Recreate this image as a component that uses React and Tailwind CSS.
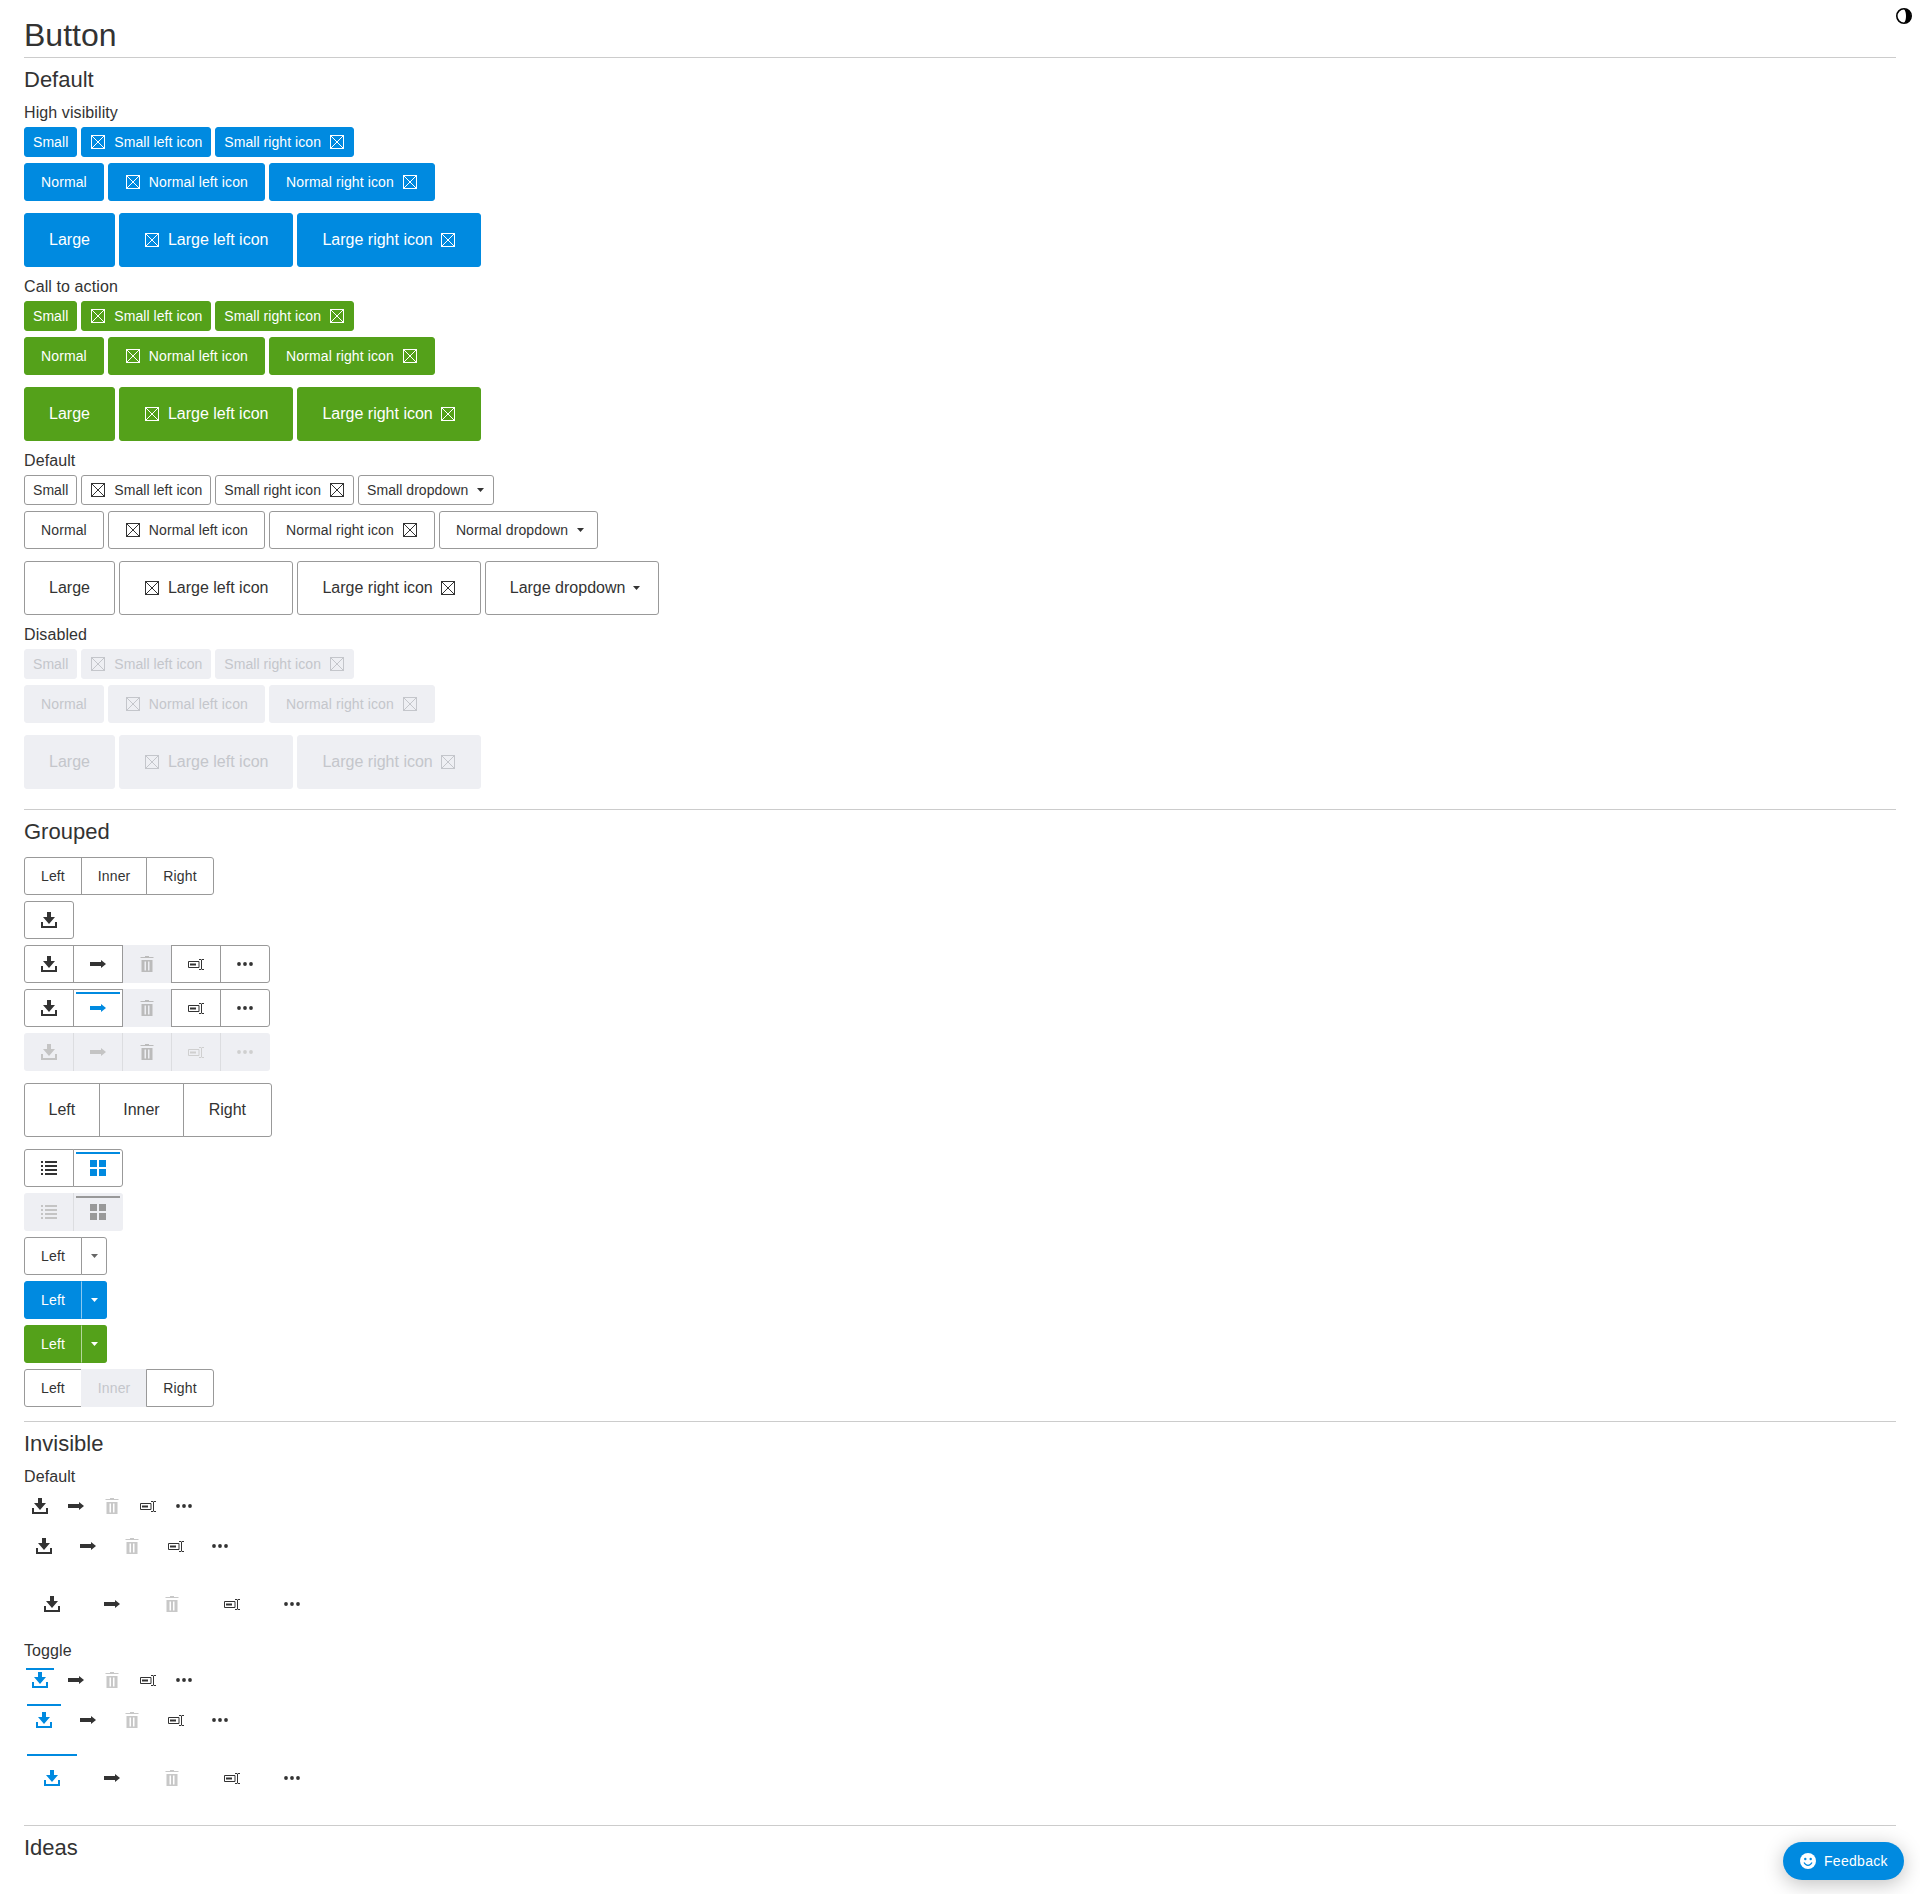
import { Fragment } from 'react';

const BLUE = 'bg-[#008ae0] border-[#008ae0] text-white';
const GREEN = 'bg-[#54a11a] border-[#54a11a] text-white';
const PLAIN = 'bg-white border-[#999999] text-[#333333]';
const OFF = 'bg-[#eeeff3] border-[#eeeff3] text-[#c4c6cb]';

const sizes = {
  small: {
    height: 'h-[30px]',
    text: 'text-[14px] tracking-[0.06px]',
    plain: 'px-[8px]',
    left: 'pl-[9px] pr-[8px] gap-[9px]',
    right: 'pl-[8px] pr-[9px] gap-[9px]',
    drop: 'pl-[8px] pr-[9px] gap-[9px]',
  },
  normal: {
    height: 'h-[38px]',
    text: 'text-[14px] tracking-[0.12px]',
    plain: 'px-[16px]',
    left: 'pl-[17px] pr-[16px] gap-[9px]',
    right: 'pl-[16px] pr-[17px] gap-[9px]',
    drop: 'pl-[16px] pr-[13px] gap-[9px]',
  },
  large: {
    height: 'h-[54px]',
    text: 'text-[16px]',
    plain: 'px-[24px]',
    left: 'pl-[25px] pr-[24px] gap-[9px]',
    right: 'pl-[24px] pr-[25px] gap-[8px]',
    drop: 'pl-[24px] pr-[18px] gap-[8px]',
  },
};

function BoxIcon({ className }) {
  return (
    <svg viewBox="0 0 14 14" className={`w-[14px] h-[14px] shrink-0 ${className}`} fill="none" stroke="currentColor" strokeWidth="1">
      <rect x="0.5" y="0.5" width="13" height="13" />
      <path d="M1 1l12 12M13 1L1 13" />
    </svg>
  );
}

function Caret({ className = '' }) {
  return (
    <svg viewBox="0 0 7 4" className={`w-[7px] h-[4px] shrink-0 ${className}`} fill="currentColor">
      <path d="M0 0h7L3.5 4z" />
    </svg>
  );
}

function DownloadIcon({ className = '' }) {
  return (
    <svg viewBox="0 0 16 16" className={`w-4 h-4 shrink-0 ${className}`} fill="currentColor">
      <path d="M6 0h4v5h4l-6 7-6-7h4z" />
      <path d="M0 10h2v4h12v-4h2v6H0z" />
    </svg>
  );
}

function ArrowIcon({ className = '' }) {
  return (
    <svg viewBox="0 0 16 16" className={`w-4 h-4 shrink-0 ${className}`} fill="currentColor">
      <path d="M0 6h11V4l5 4-5 4v-2H0z" />
    </svg>
  );
}

function TrashIcon({ className = '' }) {
  return (
    <svg viewBox="0 0 16 16" className={`w-4 h-4 shrink-0 ${className}`} fill="currentColor">
      <path d="M6 0h4v1h4.500v1h-13V1H6z" />
      <path fillRule="evenodd" d="M2.500 4h11v12h-11zM5.500 5.500v9h1.500v-9zM9 5.500v9h1.500v-9z" />
    </svg>
  );
}

function RenameIcon({ className = '' }) {
  return (
    <svg viewBox="0 0 16 16" className={`w-4 h-4 shrink-0 ${className}`} fill="none" stroke="currentColor" strokeWidth="1">
      <path d="M11 5.500H0.500v6H11z" />
      <rect x="2" y="7.500" width="6" height="2" fill="currentColor" stroke="none" />
      <path d="M11 3.500h2l.5.5.5-.5h2M13.500 4v9M11 13.500h2l.5-.5.5.5h2" />
    </svg>
  );
}

function DotsIcon({ className = '' }) {
  return (
    <svg viewBox="0 0 16 16" className={`w-4 h-4 shrink-0 ${className}`} fill="currentColor">
      <circle cx="2" cy="8" r="1.900" />
      <circle cx="8" cy="8" r="1.900" />
      <circle cx="14" cy="8" r="1.900" />
    </svg>
  );
}

function ListIcon({ className = '' }) {
  return (
    <svg viewBox="0 0 16 16" className={`w-4 h-4 shrink-0 ${className}`} fill="currentColor">
      <path d="M0 1h2v2H0zM4 1h12v2H4zM0 5h2v2H0zM4 5h12v2H4zM0 9h2v2H0zM4 9h12v2H4zM0 13h2v2H0zM4 13h12v2H4z" />
    </svg>
  );
}

function GridIcon({ className = '' }) {
  return (
    <svg viewBox="0 0 16 16" className={`w-4 h-4 shrink-0 ${className}`} fill="currentColor">
      <path d="M0 0h7v7H0zM9 0h7v7H9zM0 9h7v7H0zM9 9h7v7H9z" />
    </svg>
  );
}

function ContrastIcon() {
  return (
    <svg viewBox="0 0 16 16" className="w-4 h-4">
      <circle cx="8" cy="8" r="7.200" fill="#ffffff" stroke="#000000" strokeWidth="1.600" />
      <path d="M8 1a7 7 0 0 1 0 14c1.500-2 2-4 2-7s-.5-5-2-7z" fill="#000000" />
    </svg>
  );
}

function SmileIcon() {
  return (
    <svg viewBox="0 0 16 16" className="w-4 h-4 shrink-0">
      <circle cx="8" cy="8" r="8" fill="#ffffff" />
      <circle cx="5.300" cy="6" r="1.200" fill="#008ae0" />
      <circle cx="10.700" cy="6" r="1.200" fill="#008ae0" />
      <path d="M4 9.500c1 2 2.500 2.800 4 2.800s3-.8 4-2.800" fill="none" stroke="#008ae0" strokeWidth="1.200" />
    </svg>
  );
}

function Btn({ size, tone, label, kind }) {
  const s = sizes[size];
  const pad = kind ? s[kind] : s.plain;
  return (
    <button className={`${s.height} ${s.text} ${pad} ${tone} flex items-center border rounded-[3px] whitespace-nowrap`}>
      {kind === 'left' && <BoxIcon />}
      <span>{label}</span>
      {kind === 'right' && <BoxIcon />}
      {kind === 'drop' && <Caret />}
    </button>
  );
}

function ButtonSet({ title, tone, dropdown }) {
  const names = [
    ['small', 'Small'],
    ['normal', 'Normal'],
    ['large', 'Large'],
  ];
  return (
    <>
      <div className="mt-[9px] mb-[5px] h-[20px] pt-px text-[16px] leading-[20px] tracking-[0.1px]">{title}</div>
      {names.map(([size, name], i) => (
        <div key={size} className={`flex gap-[4px] ${i === 1 ? 'mt-[6px]' : ''} ${i === 2 ? 'mt-[12px]' : ''}`}>
          <Btn size={size} tone={tone} label={name} />
          <Btn size={size} tone={tone} label={`${name} left icon`} kind="left" />
          <Btn size={size} tone={tone} label={`${name} right icon`} kind="right" />
          {dropdown && <Btn size={size} tone={tone} label={`${name} dropdown`} kind="drop" />}
        </div>
      ))}
    </>
  );
}

function Heading({ children, rule = true }) {
  return (
    <>
      {rule && <div className="h-px bg-[#cccccc]" />}
      <h2 className="mt-[7px] h-[28px] pt-px text-[22px] leading-[28px]">{children}</h2>
    </>
  );
}

// one segment of a joined group
function Seg({ first, last, tone = PLAIN, className = '', children, bar }) {
  const round = `${first ? 'rounded-l-[3px]' : '-ml-px'} ${last ? 'rounded-r-[3px]' : ''}`;
  return (
    <button className={`relative flex items-center justify-center border ${tone} ${round} ${className}`}>
      {bar && <span className={`absolute top-[2px] left-[2px] right-[2px] h-[2px] ${bar}`} />}
      {children}
    </button>
  );
}

function TextGroup({ large, items }) {
  return (
    <div className="flex">
      {items.map((item, i) => {
        const last = i === items.length - 1;
        const size = large
          ? `h-[54px] text-[16px] ${last ? 'px-[24.5px]' : 'px-[23.5px]'}`
          : 'h-[38px] px-[16px] text-[14px] tracking-[0.12px]';
        return (
          <Seg key={i} first={i === 0} last={last} className={size} tone={item.off ? OFF : PLAIN}>
            {item.label}
          </Seg>
        );
      })}
    </div>
  );
}

function IconRow({ mode }) {
  const icons = [DownloadIcon, ArrowIcon, TrashIcon, RenameIcon, DotsIcon];
  const size = 'h-[38px] w-[50px]';
  const disabled = mode === 'disabled';
  return (
    <div className="flex">
      {icons.map((Icon, i) => {
        const last = i === icons.length - 1;
        const on = mode === 'toggled' && i === 1;
        if (disabled) {
          const edge = `${i === 0 ? 'rounded-l-[3px] pl-px' : 'border-l border-[#dcdde0]'} ${last ? 'rounded-r-[3px] w-[50px] pr-px' : 'w-[49px]'}`;
          return (
            <div key={i} className={`h-[38px] flex items-center justify-center bg-[#eeeff3] ${edge}`}>
              <Icon className={i === 2 ? 'text-[#bbbbbb]' : i === 0 || i === 1 ? 'text-[#c4c4c4]' : 'text-[#cfcfcf]'} />
            </div>
          );
        }
        if (i === 2) {
          return (
            <Seg key={i} tone="bg-[#eeeff3] border-[#eeeff3]" className={`${size} z-0`}>
              <TrashIcon className="text-[#bbbbbb]" />
            </Seg>
          );
        }
        return (
          <Seg key={i} first={i === 0} last={last} className={`${size} ${i === 1 || i === 3 ? 'z-10' : ''}`} bar={on ? 'bg-[#008ae0]' : ''}>
            <Icon className={on ? 'text-[#008ae0]' : 'text-[#333333]'} />
          </Seg>
        );
      })}
    </div>
  );
}

function SplitButton({ tone, divider, caret }) {
  return (
    <div className="flex">
      <button className={`h-[38px] w-[58px] text-[14px] tracking-[0.12px] border rounded-l-[3px] ${tone}`}>Left</button>
      <button className={`-ml-px h-[38px] w-[26px] flex items-center justify-center border rounded-r-[3px] ${tone} ${divider}`}>
        <Caret className={caret} />
      </button>
    </div>
  );
}

function ViewToggle({ disabled }) {
  if (disabled) {
    return (
      <div className="flex">
        <div className="h-[38px] w-[49px] pl-px flex items-center justify-center bg-[#eeeff3] rounded-l-[3px]">
          <ListIcon className="text-[#c4c4c4]" />
        </div>
        <div className="relative h-[38px] w-[50px] pr-px flex items-center justify-center bg-[#eeeff3] border-l border-[#dcdde0] rounded-r-[3px]">
          <span className="absolute top-[3px] left-[2px] right-[3px] h-[2px] bg-[#999999]" />
          <GridIcon className="text-[#999999]" />
        </div>
      </div>
    );
  }
  return (
    <div className="flex">
      <Seg first className="h-[38px] w-[50px]">
        <ListIcon className="text-[#333333]" />
      </Seg>
      <Seg last className="h-[38px] w-[50px]" bar="bg-[#008ae0]">
        <GridIcon className="text-[#008ae0]" />
      </Seg>
    </div>
  );
}

function InvisibleRow({ size, toggle }) {
  const box = {
    small: { btn: 'h-[30px] w-[32px]', bar: 'left-[2px] right-[2px]', gap: 'gap-[4px]' },
    normal: { btn: 'h-[38px] w-[40px]', bar: 'left-[3px] right-[3px]', gap: 'gap-[4px]' },
    large: { btn: 'h-[54px] w-[56px]', bar: 'left-[3px] right-[3px]', gap: 'gap-[4px]' },
  }[size];
  const icons = [DownloadIcon, ArrowIcon, TrashIcon, RenameIcon, DotsIcon];
  return (
    <div className={`flex ${box.gap}`}>
      {icons.map((Icon, i) => {
        const on = toggle && i === 0;
        return (
          <button key={i} className={`relative flex items-center justify-center ${box.btn}`}>
            {on && <span className={`absolute top-[3px] h-[2px] bg-[#008ae0] ${box.bar}`} />}
            <Icon className={on ? 'text-[#008ae0]' : i === 2 ? 'text-[#c8c8c8]' : 'text-[#333333]'} />
          </button>
        );
      })}
    </div>
  );
}

function InvisibleSet({ title, toggle }) {
  return (
    <Fragment>
      <div className="mt-[9px] mb-[5px] h-[20px] pt-px text-[16px] leading-[20px] tracking-[0.1px]">{title}</div>
      <InvisibleRow size="small" toggle={toggle} />
      <div className="mt-[6px]">
        <InvisibleRow size="normal" toggle={toggle} />
      </div>
      <div className="mt-[12px]">
        <InvisibleRow size="large" toggle={toggle} />
      </div>
    </Fragment>
  );
}

export default function App() {
  return (
    <div className="relative min-h-[1894px] bg-white px-[24px] pt-[12px] text-[#333333] font-['Liberation_Sans',Arial,sans-serif]">
      <button className="absolute top-[8px] right-[8px]">
        <ContrastIcon />
      </button>

      <h1 className="text-[32px] leading-[47px] border-b border-[#cccccc] h-[46px]">Button</h1>

      <h2 className="mt-[7px] h-[28px] pt-px text-[22px] leading-[28px]">Default</h2>
      <ButtonSet title="High visibility" tone={BLUE} />
      <ButtonSet title="Call to action" tone={GREEN} />
      <ButtonSet title="Default" tone={PLAIN} dropdown />
      <ButtonSet title="Disabled" tone={OFF} />

      <div className="mt-[20px]">
        <Heading>Grouped</Heading>
      </div>
      <div className="mt-[12px] flex flex-col items-start gap-[6px]">
        <TextGroup items={[{ label: 'Left' }, { label: 'Inner' }, { label: 'Right' }]} />
        <Seg first last className="h-[38px] w-[50px]">
          <DownloadIcon className="text-[#333333]" />
        </Seg>
        <IconRow />
        <IconRow mode="toggled" />
        <IconRow mode="disabled" />
        <div className="my-[6px]">
          <TextGroup large items={[{ label: 'Left' }, { label: 'Inner' }, { label: 'Right' }]} />
        </div>
        <ViewToggle />
        <ViewToggle disabled />
        <SplitButton tone={PLAIN} divider="" caret="text-[#666666]" />
        <SplitButton tone={BLUE} divider="border-l-[#8cc8ef]" caret="text-white" />
        <SplitButton tone={GREEN} divider="border-l-[#b5d69c]" caret="text-white" />
        <TextGroup items={[{ label: 'Left' }, { label: 'Inner', off: true }, { label: 'Right' }]} />
      </div>

      <div className="mt-[14px]">
        <Heading>Invisible</Heading>
      </div>
      <InvisibleSet title="Default" />
      <InvisibleSet title="Toggle" toggle />

      <div className="mt-[20px]">
        <Heading>Ideas</Heading>
      </div>

      <button className="absolute left-[1783px] top-[1842px] h-[38px] w-[121px] flex items-center gap-[8px] pl-[17px] rounded-full bg-[#008ae0] text-white text-[14px] tracking-[0.3px] shadow-[0_4px_20px_rgba(0,0,0,0.25)]">
        <SmileIcon />
        <span>Feedback</span>
      </button>
    </div>
  );
}
